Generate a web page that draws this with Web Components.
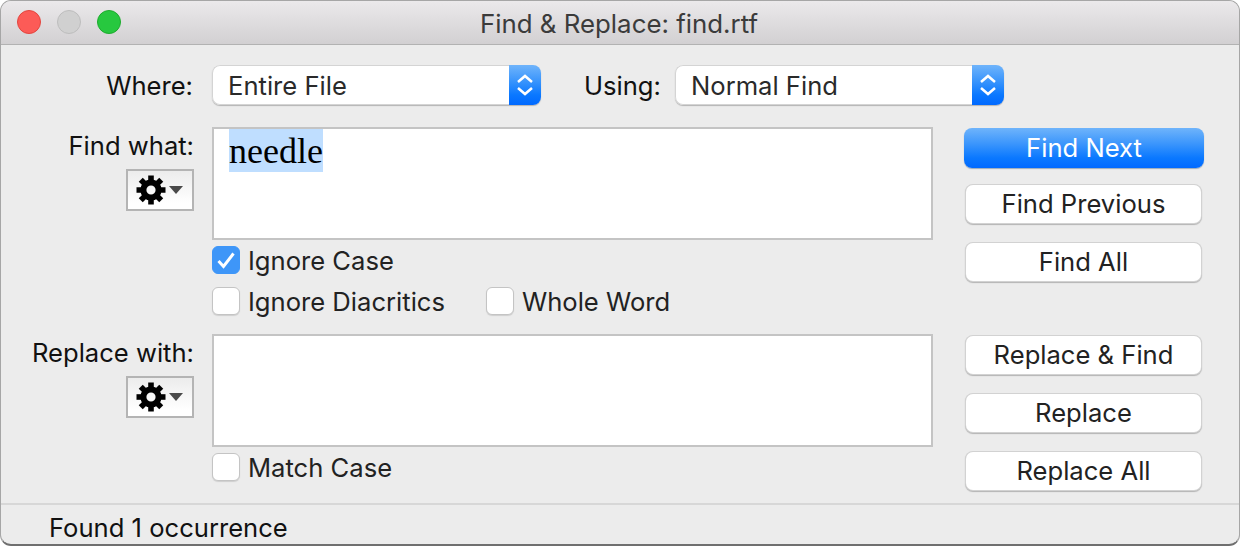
<!DOCTYPE html>
<html><head><meta charset="utf-8">
<style>
html,body{margin:0;padding:0;background:#fff;width:1240px;height:546px;overflow:hidden}
body{font-family:Inter,Roboto,"Liberation Sans",sans-serif;font-size:25.6px;color:#1c1c1c}
</style></head><body>
<fr-window>
  <fr-titlebar slot="title">Find &amp; Replace: find.rtf</fr-titlebar>
  <fr-where>
    <fr-label class="w">Where:</fr-label><fr-select>Entire File</fr-select>
    <fr-label class="u">Using:</fr-label><fr-select>Normal Find</fr-select>
  </fr-where>
  <fr-find-section label="Find what:" text="needle" style="margin-top:22px">
    <fr-check-row slot="checks"><fr-check checked>Ignore Case</fr-check></fr-check-row>
    <fr-check-row slot="checks"><fr-check>Ignore Diacritics</fr-check><fr-check>Whole Word</fr-check></fr-check-row>
    <fr-button slot="buttons" primary>Find Next</fr-button>
    <fr-button slot="buttons" style="margin-top:17px">Find Previous</fr-button>
    <fr-button slot="buttons" style="margin-top:20px">Find All</fr-button>
  </fr-find-section>
  <fr-find-section label="Replace with:" style="margin-top:6px">
    <fr-check-row slot="checks"><fr-check>Match Case</fr-check></fr-check-row>
    <fr-button slot="buttons" style="margin-top:1px">Replace &amp; Find</fr-button>
    <fr-button slot="buttons" style="margin-top:20px">Replace</fr-button>
    <fr-button slot="buttons" style="margin-top:20px">Replace All</fr-button>
  </fr-find-section>
  <fr-status>Found 1 occurrence</fr-status>
</fr-window>
<script>
function def(name, css, html){
  customElements.define(name, class extends HTMLElement{
    constructor(){super();const r=this.attachShadow({mode:'open'});
      r.innerHTML='<style>'+css+'</style>'+(typeof html==='function'?html(this):html);}
  });
}
def('fr-window',`:host{display:flex;flex-direction:column;box-sizing:border-box;width:1240px;height:546px;background:#ececec;border:1px solid #a6a6a6;border-bottom:2px solid #6f6f6f;border-radius:11px;overflow:hidden}`,'<slot name="title"></slot><slot></slot>');
def('fr-titlebar',`:host{display:flex;align-items:center;box-sizing:border-box;height:44px;flex:none;background:linear-gradient(#ebe9eb,#d2d0d2);border-bottom:1px solid #b2b2b2;position:relative;padding-left:16px;gap:16px}
.d{width:24px;height:24px;border-radius:50%;box-sizing:border-box;margin-top:-1px}
.r{background:#fc5b57;border:1px solid #e2463f}.m{background:#d0d0d0;border:1px solid #bdbdbd}.g{background:#27c83f;border:1px solid #1eab2e}
.t{position:absolute;left:0;right:2px;top:1px;bottom:0;display:flex;align-items:center;justify-content:center;font-size:25.85px;color:#3b3b3b}`,
'<span class="d r"></span><span class="d m"></span><span class="d g"></span><div class="t"><slot></slot></div>');
def('fr-where',`:host{display:flex;align-items:center;height:40px;flex:none;margin-top:20px;color:#111}`,'<slot></slot>');
def('fr-label',`:host{display:block;line-height:40px;padding-top:2px;color:#111}
:host(.w){width:192px;text-align:right;margin-right:19px}
:host(.u){margin-left:43px;width:76px;margin-right:15px;white-space:nowrap}`,'<slot></slot>');
def('fr-select',`:host{display:flex;box-sizing:border-box;width:329px;height:40px;border-radius:8px;box-shadow:0 1px 1px #b4b4b4;overflow:hidden;color:#2a2a2a}
.v{flex:1;box-sizing:border-box;padding-left:15px;line-height:40px;background:#fff;border:1px solid #d4d4d4;border-right:0;border-radius:8px 0 0 8px}
.s{width:32px;background:linear-gradient(#6fb4fb,#3a95fc 40%,#0a78ff 75%,#0069ff);display:flex;align-items:center;justify-content:center}`,
'<div class="v"><slot></slot></div><div class="s"><svg width="20" height="30" viewBox="0 0 20 30" fill="none" stroke="#fff" stroke-width="2.5"><path d="M3 12 10 6 17 12M3 18 10 24 17 18"/></svg></div>');
function gear(){let t='';for(let i=0;i<8;i++){const a=i*Math.PI/4,c=Math.cos(a),s=Math.sin(a);
  t+=`<line x1="${(15+8*c).toFixed(2)}" y1="${(15+8*s).toFixed(2)}" x2="${(15+14.5*c).toFixed(2)}" y2="${(15+14.5*s).toFixed(2)}"/>`;}
  return `<svg width="30" height="30" viewBox="0 0 30 30" fill="none" stroke="#000"><circle cx="15" cy="15" r="7.6" stroke-width="6"/><g stroke-width="5.6">${t}</g></svg>`;}
def('fr-gear',`:host{display:flex;align-items:center;box-sizing:border-box;width:68px;height:42px;border:2px solid #b4b4b4;background:linear-gradient(#ececec,#ffffff 85%);padding-left:8px;gap:3px}
.c{width:0;height:0;border-left:7.5px solid transparent;border-right:7.5px solid transparent;border-top:8px solid #4a4a4a;margin-top:-1px}`,
()=>gear()+'<span class="c"></span>');
def('fr-find-section',`:host{display:grid;grid-template-columns:193px 739px 240px;flex:none}
.l{display:flex;flex-direction:column;align-items:flex-end}
.lab{line-height:38px;color:#111;white-space:nowrap}
fr-gear{margin-top:4px}
.m{margin-left:18px}
.f{box-sizing:border-box;height:113px;background:#fff;border:2px solid #c4c4c4;padding:0 15px;font:36px/45px "Liberation Serif",serif;color:#000}
.f span{display:block;width:fit-content;background:#bfdeff;height:43px}
.b{margin-left:31px;display:flex;flex-direction:column;align-items:stretch;padding-top:1px}
.ch{display:block;margin-top:6px}`,
e=>{const t=e.getAttribute('text');return `<div class="l"><div class="lab">${e.getAttribute('label')}</div><fr-gear></fr-gear></div>
<div class="m"><div class="f">${t?'<span>'+t+'</span>':''}</div><div class="ch"><slot name="checks"></slot></div></div>
<div class="b"><slot name="buttons"></slot></div>`});
def('fr-check-row',`:host{display:flex;gap:41px;height:28px;margin-bottom:13px}`,'<slot></slot>');
def('fr-check',`:host{display:flex;align-items:center;gap:8px;color:#222;white-space:nowrap}
.x{padding-top:1px}
.b{box-sizing:border-box;width:28px;height:28px;border-radius:6px;background:#fff;border:1px solid #c4c4c4;box-shadow:0 1px 1px #cfcfcf;display:flex;align-items:center;justify-content:center}
.b.on{background:#3e96f8;border-color:#3e96f8;box-shadow:none}`,
e=>(e.hasAttribute('checked')?'<span class="b on"><svg width="20" height="20" viewBox="0 0 20 20" fill="none" stroke="#fff" stroke-width="3"><path d="M2.5 11 7.5 16.5 17.5 3.5"/></svg></span>':'<span class="b"></span>')+'<span class="x"><slot></slot></span>');
def('fr-button',`:host{display:flex;align-items:center;justify-content:center;box-sizing:border-box;height:38px;width:235px;background:#fff;border-radius:7px;box-shadow:0 0 0 1px #d2d2d2,0 1px 1px 1px #b4b4b4;color:#222;margin-left:2px;padding-bottom:1px;white-space:nowrap}
:host([primary]){height:40px;width:240px;margin-left:0;border-radius:8px;background:linear-gradient(#6fb4fb,#3a95fc 40%,#0a78ff 75%,#0069ff);color:#fff;box-shadow:0 1px 1px #9ab}`,'<slot></slot>');
def('fr-status',`:host{display:block;margin-top:auto;box-sizing:border-box;height:41px;flex:none;border-top:2px solid #d7d7d7;padding-left:48px;line-height:45px;color:#111}`,'<slot></slot>');
</script>
</body></html>
